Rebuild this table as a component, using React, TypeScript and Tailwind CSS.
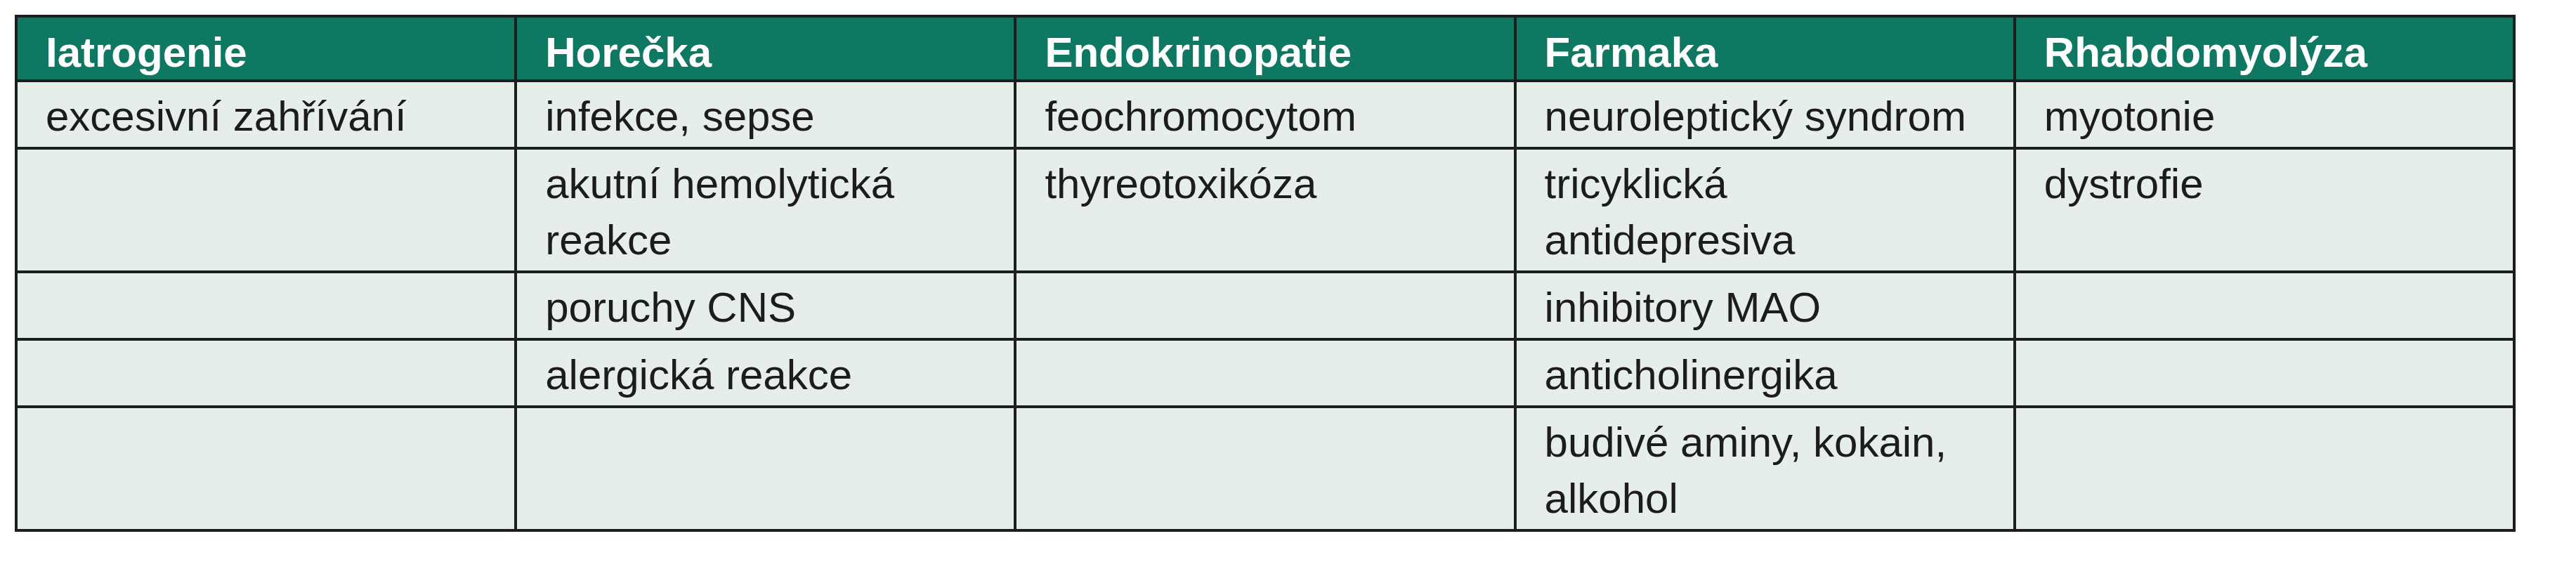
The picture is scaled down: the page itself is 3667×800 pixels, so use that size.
const HEADERS = ["Iatrogenie", "Horečka", "Endokrinopatie", "Farmaka", "Rhabdomyolýza"];

// each cell is a list of lines, empty list = empty cell
const ROWS: string[][][] = [
  [["excesivní zahřívání"], ["infekce, sepse"], ["feochromocytom"], ["neuroleptický syndrom"], ["myotonie"]],
  [[], ["akutní hemolytická", "reakce"], ["thyreotoxikóza"], ["tricyklická", "antidepresiva"], ["dystrofie"]],
  [[], ["poruchy CNS"], [], ["inhibitory MAO"], []],
  [[], ["alergická reakce"], [], ["anticholinergika"], []],
  [[], [], [], ["budivé aminy, kokain,", "alkohol"], []],
];

export default function App() {
  return (
    <div className="w-[3667px] h-[800px] bg-white pt-[21px] pl-[21px] font-['Liberation_Sans',Arial,sans-serif]">
      <div className="w-[3560px] grid grid-cols-5 gap-[4px] p-[4px] bg-[#1b1e1e]">
        {HEADERS.map((h) => (
          <div key={h} className="bg-[#0f7862] pl-[40px] pt-[12px] text-[60px] leading-[76px] font-bold text-white">
            {h}
          </div>
        ))}
        {ROWS.map((row, r) =>
          row.map((cell, c) => (
            <div
              key={`${r}-${c}`}
              className="bg-[#e6eeea] pl-[40px] pt-[9px] pb-[3px] text-[60px] leading-[80px] text-[#1c1c1c] whitespace-nowrap"
            >
              {cell.map((line, i) => (
                <div key={i}>{line}</div>
              ))}
              {cell.length === 0 && <div>&nbsp;</div>}
            </div>
          ))
        )}
      </div>
    </div>
  );
}
